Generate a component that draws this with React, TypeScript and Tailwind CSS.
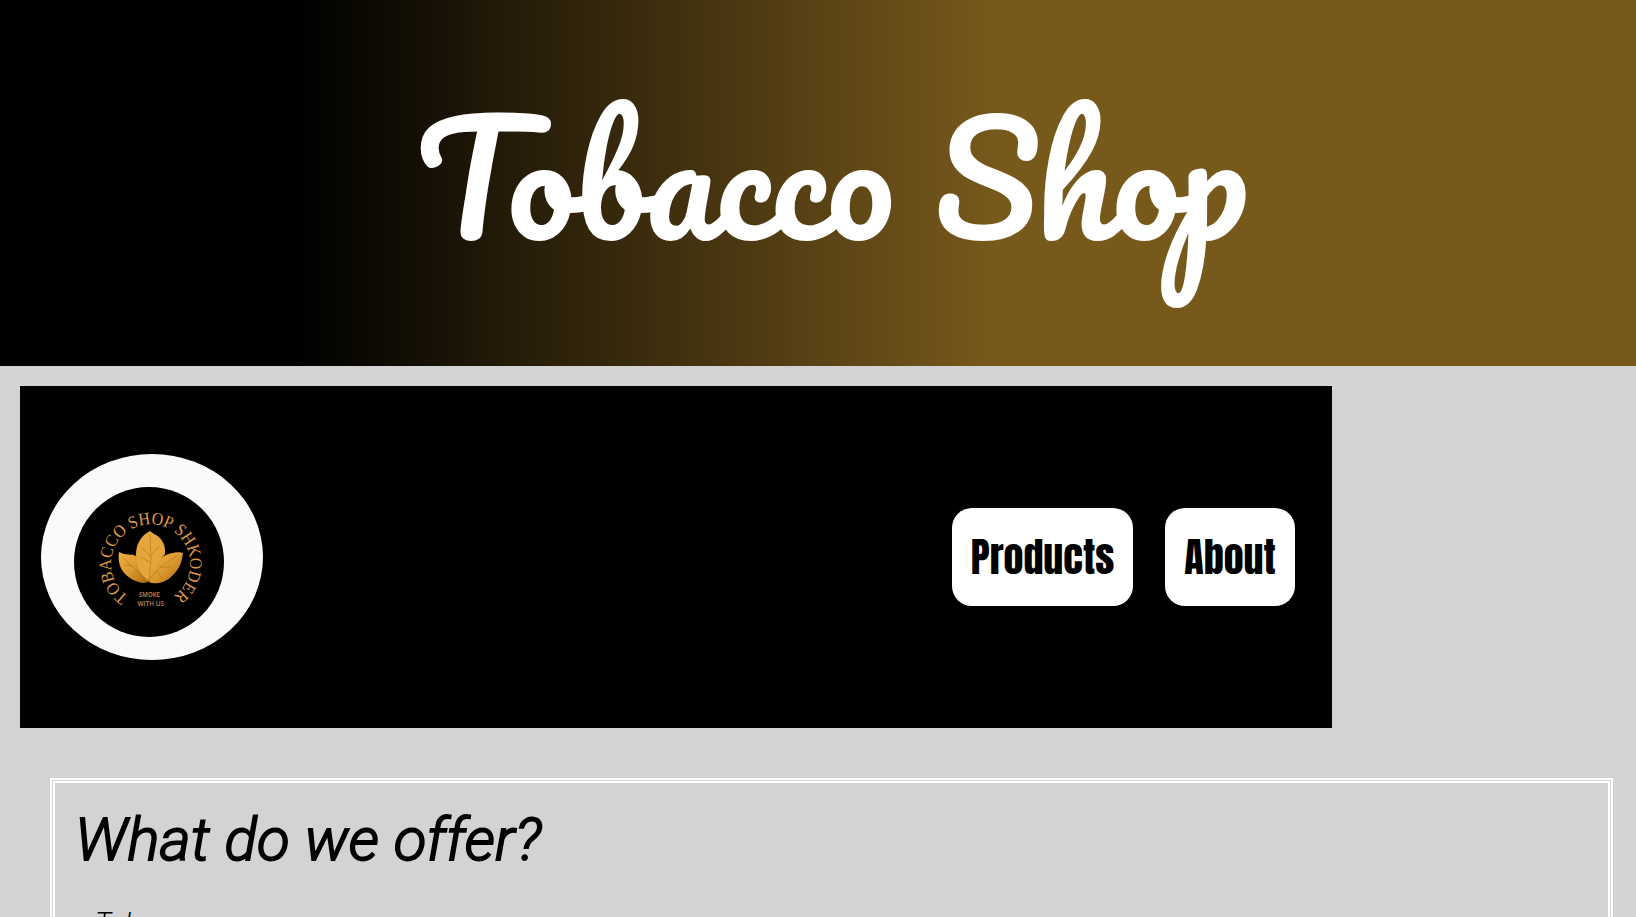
function Logo() {
  return (
    <a className="flex h-[206px] w-[222px] shrink-0 rounded-[50%] bg-[#fafafa] pt-[33px] pl-[33px]">
      <svg viewBox="0 0 150 150" className="size-[150px]">
        <defs>
          <linearGradient id="leaf" x1="0" y1="0" x2="1" y2="1">
            <stop offset="0" stopColor="#f0ae42" />
            <stop offset="0.5" stopColor="#dc9a30" />
            <stop offset="1" stopColor="#a9660f" />
          </linearGradient>
          <path id="arc" d="M54.5 109.5 A39.5 39.5 0 1 1 98 110" fill="none" />
        </defs>
        <circle cx="75" cy="75" r="75" fill="#000" />
        <text fontSize="17.5" fill="#dc9846" fontFamily="'Liberation Serif', serif">
          <textPath href="#arc" startOffset="0" textLength="200" lengthAdjust="spacingAndGlyphs">TOBACCO SHOP SHKODER</textPath>
        </text>
        <path d="M45 65 L50 67 L60 68 L66 72 L75 95 L69 96 C57 94 42 85 45 65Z" fill="url(#leaf)" />
        <path d="M109 66 C105 64 95 66 90 69 C81 74 77 84 75 95 C81 98 91 96 98 89 C106 82 108 74 109 66Z" fill="url(#leaf)" />
        <path d="M76 44 C66 49 62 58 62 68 C62 81 68 89 75 94 C78 84 83 76 91 67 C92 57 87 50 80 47Z" fill="#e5a63b" />
        <path d="M76 47 L77 72 L75 93 M75 93 L86 80 L103 69 M72 92 L58 79 L48 70 M77 70 L68 61 M77 76 L67 70 M78 66 L86 59 M86 80 L98 80 M83 84 L88 91 M58 79 L50 78" fill="none" stroke="#a86a1a" strokeWidth="0.7" opacity="0.7" />
        <text x="65" y="110.3" fontSize="6.2" textLength="21" lengthAdjust="spacingAndGlyphs" fill="#c58a4f" fontFamily="'Open Sans', sans-serif" fontWeight="600">SMOKE</text>
        <text x="63.5" y="118.5" fontSize="6.2" textLength="26.5" lengthAdjust="spacingAndGlyphs" fill="#c58a4f" fontFamily="'Open Sans', sans-serif" fontWeight="600">WITH US</text>
      </svg>
    </a>
  );
}

export default function App() {
  return (
    <div className="h-[917px] overflow-hidden bg-[#d3d3d3] text-black">
      <header className="h-[366px] w-[1663px] bg-[linear-gradient(to_right,#000_18%,#78591c_60%)] pt-[45px] text-center">
        <h1 className="font-['Pacifico',cursive] text-[150px] leading-[264px] whitespace-nowrap text-white">
          Tobacco Shop
        </h1>
      </header>
      <nav className="mt-5 ml-5 flex h-[342px] w-[1312px] items-center justify-between bg-black pr-[37px] pl-[21px]">
        <Logo />
        <div className="flex gap-8 font-['Anton',sans-serif] text-[40px] leading-[60px]">
          <a className="flex h-[98px] w-[181px] items-center justify-center rounded-[20px] bg-white">Products</a>
          <a className="flex h-[98px] w-[130px] items-center justify-center rounded-[20px] bg-white">About</a>
        </div>
      </nav>
      <section className="mt-[50px] mr-[23px] ml-[50px] h-[400px] border-[5px] border-double border-white px-5 pt-[19px] font-['Roboto',sans-serif] italic">
        <h2 className="text-[60px] leading-[75px] tracking-[0.2px] font-light [-webkit-text-stroke:1.9px_black]">What do we offer?</h2>
        <p className="mt-[30px] pl-5 text-[28px] leading-8 font-light">Tobacco</p>
      </section>
    </div>
  );
}
